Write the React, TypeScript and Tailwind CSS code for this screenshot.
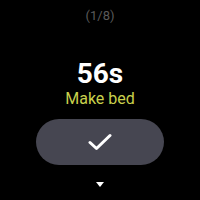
import React from 'react';

const App: React.FC = () => {
  return (
    <div
      className="w-[200px] h-[200px] bg-black flex flex-col items-center overflow-hidden"
      style={{ fontFamily: 'Roboto, "Noto Sans", sans-serif' }}
    >
      <div className="mt-[8px] text-[13px] leading-[16px] text-[#5a5a5a]">(1/8)</div>
      <div className="mt-[34px] text-[28px] leading-[32px] font-bold text-white">56s</div>
      <div className="mt-[-1px] text-[16px] leading-[20px] text-[#c9d04c]">Make bed</div>
      {/* kesz gomb */}
      <button className="mt-[10px] w-[128px] h-[46px] rounded-full bg-[#464651] flex items-center justify-center">
        <svg width="24" height="18" viewBox="0 0 24 18" fill="none">
          <path d="M2 9.5 L8.5 15.5 L22 2.5" stroke="white" strokeWidth="3" strokeLinecap="round" strokeLinejoin="round" />
        </svg>
      </button>
      <svg className="mt-[17px]" width="8" height="5" viewBox="0 0 8 5">
        <path d="M0 0 H8 L4 5 Z" fill="white" />
      </svg>
    </div>
  );
};

export default App;
